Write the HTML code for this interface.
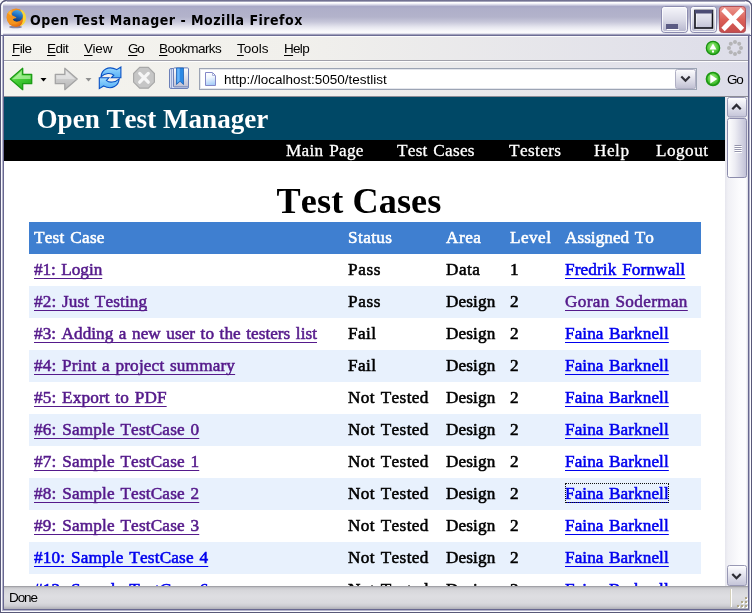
<!DOCTYPE html>
<html><head><meta charset="utf-8"><title>Open Test Manager - Mozilla Firefox</title>
<style>
html,body{margin:0;padding:0;}
body{width:752px;height:613px;overflow:hidden;position:relative;background:#d8d8e4;font-family:"Liberation Sans",sans-serif;}
.abs{position:absolute;}
#content *{font-kerning:none !important;}
.mi,#title,#status span,#content{will-change:transform;}
#titlebar{left:0;top:0;width:752px;height:36px;background:linear-gradient(#6a6a8a 0,#7c7c9c 1.2px,#ffffff 2.2px,#ffffff 3px,#dcdcea 4.5px,#a9a9c7 6.5px,#afafc9 9px,#b3b3cb 17px,#c6c6d9 22px,#e6e6ef 27px,#f8f8fb 31px,#fbfbfd 33px,#c0c0d4 34.2px,#6c6c94 35px,#6c6c94 36px);}
#title{left:30px;top:11px;font:bold 14px "DejaVu Sans Condensed","DejaVu Sans",sans-serif;color:#000;white-space:pre;line-height:18px;letter-spacing:0.5px;}
#menubar{left:4px;top:36px;width:744px;height:24px;background:linear-gradient(90deg,#f4f3ee 0,#f1f0ec 40%,#dddde9 100%);border-bottom:1px solid #a0a0aa;box-shadow:inset 0 1px 0 rgba(255,255,255,.85);}
.mi{position:absolute;top:41px;font:13.5px "Liberation Sans",sans-serif;line-height:16px;color:#000;white-space:pre;}
.mi u{text-decoration:underline;text-underline-offset:2px;text-decoration-thickness:1px;text-decoration-skip-ink:none;}
#toolbar{left:4px;top:61px;width:744px;height:35px;background:linear-gradient(90deg,#f4f3ee 0,#f1f0ec 40%,#dddde9 100%);border-bottom:1px solid #8c8c96;box-shadow:inset 0 1px 0 rgba(255,255,255,.9);}
#content{left:4px;top:97px;width:721px;height:489px;background:#fff;overflow:hidden;font-family:"Liberation Serif",serif;font-size:18px;}
#hdr{left:0;top:0;width:721px;height:43px;background:#004866;}
#hdr span{position:absolute;left:32.5px;top:7px;font:bold 27.1px "Liberation Serif",serif;color:#fff;line-height:31px;white-space:pre;}
#nav{left:0;top:43px;width:721px;height:21px;background:#000;}
#nav span{position:absolute;top:0px;color:#fff;font:17.2px/21px "Liberation Serif",serif;white-space:pre;-webkit-text-stroke:0.3px;word-spacing:1.2px;}
h1{position:absolute;left:0;top:83px;width:710px;margin:0;text-align:center;font:bold 36.2px "Liberation Serif",serif;line-height:42px;letter-spacing:0.1px;}
#tbl{left:25px;top:125px;width:672px;}
.row{position:absolute;left:0;width:672px;height:32px;}
.row.alt{background:#e8f1fd;}
.row.head{background:#3f7fd0;color:#fff;}
.row span,.row a{position:absolute;top:5px;-webkit-text-stroke:0.55px;white-space:pre;font:17.2px/21px "Liberation Serif",serif;word-spacing:1.2px;}
a{text-decoration:underline;text-decoration-skip-ink:none;text-underline-offset:3px;text-decoration-thickness:1.3px;}
a.v{color:#551a8b;}
a.n{color:#0000ee;}
a.f{outline:1px dotted #111;outline-offset:-1px;height:20px;}
#scroll{left:725px;top:97px;width:23px;height:489px;background:linear-gradient(90deg,#e6e6ee 0,#f0f0f5 3px,#fbfbfd 14px,#fdfdfe 21px,#d8d8e2 23px);}
#status{left:4px;top:586px;width:744px;height:23px;background:linear-gradient(#8e8e94 0,#b6b6bb 1px,#cbcbcf 2px,#d6d6da 4px,#dedee2 10px,#d9d9dd 17px,#cdcdd2 20px,#b8b8be 22px,#b0b0b8 23px);}
#status span{position:absolute;left:5px;top:4px;font:13.5px "Liberation Sans",sans-serif;line-height:16px;letter-spacing:-1.1px;}
.fr{position:absolute;box-sizing:border-box;border-style:solid;border-width:0 1px 1px 1px;}
</style></head><body>
<div id="titlebar" class="abs"></div>
<div id="title" class="abs">Open Test Manager - Mozilla Firefox</div>
<div id="menubar" class="abs"></div>
<span class="mi" style="left:12px;letter-spacing:-0.6px"><u>F</u>ile</span>
<span class="mi" style="left:47px;letter-spacing:-0.5px"><u>E</u>dit</span>
<span class="mi" style="left:84px;letter-spacing:-0.2px"><u>V</u>iew</span>
<span class="mi" style="left:128px;letter-spacing:-1.2px"><u>G</u>o</span>
<span class="mi" style="left:159px;letter-spacing:-0.6px"><u>B</u>ookmarks</span>
<span class="mi" style="left:237px;letter-spacing:0px"><u>T</u>ools</span>
<span class="mi" style="left:284px;letter-spacing:-0.7px"><u>H</u>elp</span>
<div id="toolbar" class="abs"></div>

<svg class="abs" style="left:0;top:0" width="752" height="97" viewBox="0 0 752 97">
<defs>
<linearGradient id="gbtn" x1="0" y1="0" x2="0" y2="1"><stop offset="0" stop-color="#f6f6fb"/><stop offset="0.5" stop-color="#dcdce8"/><stop offset="1" stop-color="#b4b4cc"/></linearGradient>
<linearGradient id="gclose" x1="0" y1="0" x2="0" y2="1"><stop offset="0" stop-color="#ec9890"/><stop offset="0.5" stop-color="#dc6058"/><stop offset="1" stop-color="#c44c4c"/></linearGradient>
<linearGradient id="ggreen" x1="0" y1="0" x2="0.6" y2="1"><stop offset="0" stop-color="#b0f098"/><stop offset="0.55" stop-color="#48d038"/><stop offset="1" stop-color="#28b020"/></linearGradient>
<linearGradient id="ggray" x1="0" y1="0" x2="0" y2="1"><stop offset="0" stop-color="#e4e4e4"/><stop offset="1" stop-color="#b4b4b4"/></linearGradient>
<linearGradient id="gblue" x1="0" y1="0" x2="0" y2="1"><stop offset="0" stop-color="#a0dcff"/><stop offset="0.5" stop-color="#78c4fa"/><stop offset="1" stop-color="#58b0f4"/></linearGradient>
<linearGradient id="gdd" x1="0" y1="0" x2="0" y2="1"><stop offset="0" stop-color="#fdfdfe"/><stop offset="0.5" stop-color="#e0e0ea"/><stop offset="1" stop-color="#c0c0d2"/></linearGradient>
<radialGradient id="gcirc" cx="0.45" cy="0.4" r="0.65"><stop offset="0" stop-color="#a8f088"/><stop offset="0.55" stop-color="#58cc40"/><stop offset="1" stop-color="#22a016"/></radialGradient>
<linearGradient id="gpage" x1="0.3" y1="0" x2="0.5" y2="1"><stop offset="0" stop-color="#ffffff"/><stop offset="0.4" stop-color="#f0f6fe"/><stop offset="1" stop-color="#a4ccf8"/></linearGradient>
<radialGradient id="gfox" cx="0.35" cy="0.4" r="0.75"><stop offset="0" stop-color="#f8a828"/><stop offset="0.6" stop-color="#f08818"/><stop offset="1" stop-color="#d85008"/></radialGradient><linearGradient id="gglobe" x1="0.6" y1="0" x2="0.3" y2="1"><stop offset="0" stop-color="#48a8e8"/><stop offset="0.5" stop-color="#1c68b8"/><stop offset="1" stop-color="#0c2c68"/></linearGradient>
</defs>
<!-- caption buttons -->
<rect x="661.5" y="6.5" width="26" height="26" rx="3" fill="url(#gbtn)" stroke="#8c8cb0"/>
<rect x="662.500" y="7.500" width="24" height="24" rx="2" fill="none" stroke="#fff" stroke-opacity="0.8"/><rect x="666" y="24" width="12" height="5" fill="#5c5c84"/><rect x="667" y="29" width="12" height="1" fill="#fff"/>
<rect x="690.5" y="6.5" width="26" height="26" rx="3" fill="url(#gbtn)" stroke="#8c8cb0"/>
<rect x="691.500" y="7.500" width="24" height="24" rx="2" fill="none" stroke="#fff" stroke-opacity="0.8"/><rect x="696" y="11.500" width="17.500" height="17.500" fill="none" stroke="#fff" stroke-width="1.200" stroke-opacity="0.8"/><rect x="695" y="10.500" width="17.500" height="17.500" fill="none" stroke="#101018" stroke-width="1.600"/><rect x="695" y="10" width="17.5" height="3.5" fill="#4c4c74"/>
<rect x="719.5" y="6.5" width="26" height="26" rx="3" fill="url(#gclose)" stroke="#b05058"/>
<path d="M723 9.500 L742.500 29.500 M742.500 9.500 L723 29.500" stroke="#fff" stroke-width="4.800" stroke-linecap="butt"/>
<!-- firefox icon -->
<ellipse cx="15.500" cy="27" rx="6.500" ry="1.300" fill="#383868" opacity="0.55"/>
<circle cx="16" cy="17.700" r="9.300" fill="url(#gfox)"/>
<path d="M20 9.500 C24.500 10.500 26.500 15 26 19 C25.500 22.500 23 25.500 20 26.300 C23 23 23.500 19 22.500 15.500 C22 13 21 11 20 9.500 Z" fill="#f8d438"/>
<circle cx="17" cy="15.800" r="5.900" fill="url(#gglobe)"/>
<path d="M6.800 15 C8 11.500 10 10 12.500 10.500 C11 12 11 14 12.500 15.500 C14 16 15.500 16.500 16.500 18 C15 18.300 13.500 18.500 12.800 19.500 C13.500 21.500 16 22.500 19 21.500 C17 24.500 12 25 9 22.500 C7 20.500 6.300 17.500 6.800 15 Z" fill="#f4941c"/>
<path d="M8 13 C9 11 10.500 10.300 12 10.600 C10.500 12.500 10.800 14.500 12 15.800 C10.500 15.500 9 14.500 8 13 Z" fill="#fbb43c"/>
<!-- back -->
<path d="M10.300 79 L22.700 68.300 L22.700 74.300 L31.700 74.300 L31.700 83.700 L22.700 83.700 L22.700 89.700 Z" fill="url(#ggreen)" stroke="#1c9c14" stroke-width="1.300" stroke-linejoin="round"/>
<path d="M12.600 79 L21.500 71.300 L21.500 75.500 L30.500 75.500 L30.500 79 Z" fill="#d8ffc8" opacity="0.55"/>
<path d="M40.500 78 L46.500 78 L43.500 81.500 Z" fill="#000"/>
<!-- forward -->
<path d="M77.200 79 L64.800 68.300 L64.800 74.300 L55.300 74.300 L55.300 83.700 L64.800 83.700 L64.800 89.700 Z" fill="url(#ggray)" stroke="#a4a4a4" stroke-width="1.300" stroke-linejoin="round"/>
<path d="M74.900 79 L66 71.300 L66 75.500 L56.500 75.500 L56.500 79 Z" fill="#ffffff" opacity="0.35"/>
<path d="M85.500 78 L91.500 78 L88.500 81.500 Z" fill="#909090"/>
<!-- reload -->
<g fill="url(#gblue)" stroke="#0850c4" stroke-width="1.100" stroke-linejoin="miter">
<path d="M101 76.800 C101.500 70 108 65.300 116.600 69.600 L120.900 67 L120.900 77.800 L111.300 77.800 L113.800 75.200 C111 72.500 105 73 101 76.800 Z"/>
<path d="M119.200 78.800 C118.700 85.600 112.200 90.300 103.600 86 L99.300 88.600 L99.300 77.800 L108.900 77.800 L106.400 80.400 C109.200 83.100 115.200 82.600 119.200 78.800 Z"/>
</g>
<!-- stop -->
<path d="M154.4 82.1 L148.3 88.2 L139.7 88.2 L133.6 82.1 L133.6 73.5 L139.7 67.4 L148.3 67.4 L154.4 73.5 Z" fill="#c6c6c6" stroke="#a8a8a8" stroke-width="1.200"/>
<path d="M139.700 73.400 L148.300 82.200 M148.300 73.400 L139.700 82.200" stroke="#f6f6f6" stroke-width="3.200" stroke-linecap="round"/>
<!-- bookmarks -->
<rect x="169.500" y="68.500" width="19" height="20" rx="1.500" fill="#d4def4" stroke="#6c80b8"/>
<path d="M171.500 69 V88 M173.500 69 V87" stroke="#8898c8" stroke-width="0.800"/>
<rect x="173.500" y="67.900" width="15" height="19" rx="1" fill="url(#gdd)" stroke="#6c80b8"/>
<path d="M176.500 68 L183.500 68 L183.500 84.500 L180 81.300 L176.500 84.500 Z" fill="#2c88e4" stroke="#1058b0" stroke-width="0.700"/>
<path d="M177.200 68.500 L179.700 68.500 L179.700 80.800 L177.200 83 Z" fill="#78c0ff" opacity="0.8"/>
<!-- url box -->
<rect x="199.500" y="68.500" width="497" height="21" fill="#fff" stroke="#9ca4b4"/><rect x="200.500" y="69.500" width="495" height="19" fill="none" stroke="#e4e6ec"/>
<path d="M205.500 72.500 L212.500 72.500 L215.500 75.500 L215.500 85.500 L205.500 85.500 Z" fill="url(#gpage)" stroke="#8488c8"/>
<path d="M212.500 72.500 L212.500 75.500 L215.500 75.500" fill="none" stroke="#a8b0d8"/>
<rect x="675.500" y="69.500" width="20" height="19" rx="2" fill="url(#gdd)" stroke="#b0b0c4"/>
<path d="M681.300 76.500 L685.500 80.700 L689.700 76.500" fill="none" stroke="#303038" stroke-width="2.2"/>
<!-- go -->
<circle cx="713" cy="79" r="6.500" fill="url(#gcirc)" stroke="#1c9812" stroke-width="1.700"/>
<path d="M710.300 74.600 L717.300 79 L710.300 83.400 Z" fill="#fff"/>
<!-- update + throbber -->
<circle cx="713" cy="48" r="6.700" fill="url(#gcirc)" stroke="#189010" stroke-width="1.200"/>
<path d="M713 43.500 L716.500 49.500 L709.500 49.500 Z" fill="#fff"/><rect x="712" y="50.500" width="2" height="2" fill="#fff"/>
<g fill="#b4b4b6"><circle cx="741.0" cy="48.0" r="2"/><circle cx="739.2" cy="52.2" r="2"/><circle cx="735.0" cy="54.0" r="2"/><circle cx="730.8" cy="52.2" r="2"/><circle cx="729.0" cy="48.0" r="2"/><circle cx="730.8" cy="43.8" r="2"/><circle cx="735.0" cy="42.0" r="2"/><circle cx="739.2" cy="43.8" r="2"/></g>
</svg>
<span class="mi" style="left:224px;top:72px;letter-spacing:0px">http://localhost:5050/testlist</span>
<span class="mi" style="left:727px;top:72px;letter-spacing:-1.3px">Go</span>
<div id="content" class="abs">
 <div id="hdr" class="abs"><span>Open Test Manager</span></div>
 <div id="nav" class="abs">
  <span style="left:282px;letter-spacing:0.286px">Main Page</span><span style="left:393px;letter-spacing:0.254px">Test Cases</span><span style="left:505px;letter-spacing:0.391px">Testers</span><span style="left:590px;letter-spacing:0.526px">Help</span><span style="left:652px;letter-spacing:0.469px">Logout</span>
 </div>
 <h1>Test Cases</h1>
 <div id="tbl" class="abs">
<div class="row head" style="top:0"><span style="left:5px;letter-spacing:0.246px">Test Case</span><span style="left:319px;letter-spacing:0.397px">Status</span><span style="left:417px;letter-spacing:0.526px">Area</span><span style="left:481px;letter-spacing:0.461px">Level</span><span style="left:536px;letter-spacing:0.023px">Assigned To</span></div>
<div class="row" style="top:32px"><a class="v" style="left:5px;letter-spacing:-0.033px">#1: Login</a><span style="left:319px;letter-spacing:0.632px">Pass</span><span style="left:417px;letter-spacing:0.510px">Data</span><span style="left:481px;letter-spacing:0.406px">1</span><a class="n" style="left:536px;letter-spacing:0.129px">Fredrik Fornwall</a></div>
<div class="row alt" style="top:64px"><a class="v" style="left:5px;letter-spacing:0.123px">#2: Just Testing</a><span style="left:319px;letter-spacing:0.632px">Pass</span><span style="left:417px;letter-spacing:0.128px">Design</span><span style="left:481px;letter-spacing:0.406px">2</span><a class="v" style="left:536px;letter-spacing:0.332px">Goran Soderman</a></div>
<div class="row" style="top:96px"><a class="v" style="left:5px;letter-spacing:0.032px">#3: Adding a new user to the testers list</a><span style="left:319px;letter-spacing:0.422px">Fail</span><span style="left:417px;letter-spacing:0.128px">Design</span><span style="left:481px;letter-spacing:0.406px">2</span><a class="n" style="left:536px;letter-spacing:0.067px">Faina Barknell</a></div>
<div class="row alt" style="top:128px"><a class="v" style="left:5px;letter-spacing:0.164px">#4: Print a project summary</a><span style="left:319px;letter-spacing:0.422px">Fail</span><span style="left:417px;letter-spacing:0.128px">Design</span><span style="left:481px;letter-spacing:0.406px">2</span><a class="n" style="left:536px;letter-spacing:0.067px">Faina Barknell</a></div>
<div class="row" style="top:160px"><a class="v" style="left:5px;letter-spacing:0.149px">#5: Export to PDF</a><span style="left:319px;letter-spacing:0.365px">Not Tested</span><span style="left:417px;letter-spacing:0.128px">Design</span><span style="left:481px;letter-spacing:0.406px">2</span><a class="n" style="left:536px;letter-spacing:0.067px">Faina Barknell</a></div>
<div class="row alt" style="top:192px"><a class="v" style="left:5px;letter-spacing:0.173px">#6: Sample TestCase 0</a><span style="left:319px;letter-spacing:0.365px">Not Tested</span><span style="left:417px;letter-spacing:0.128px">Design</span><span style="left:481px;letter-spacing:0.406px">2</span><a class="n" style="left:536px;letter-spacing:0.067px">Faina Barknell</a></div>
<div class="row" style="top:224px"><a class="v" style="left:5px;letter-spacing:0.173px">#7: Sample TestCase 1</a><span style="left:319px;letter-spacing:0.365px">Not Tested</span><span style="left:417px;letter-spacing:0.128px">Design</span><span style="left:481px;letter-spacing:0.406px">2</span><a class="n" style="left:536px;letter-spacing:0.067px">Faina Barknell</a></div>
<div class="row alt" style="top:256px"><a class="v" style="left:5px;letter-spacing:0.173px">#8: Sample TestCase 2</a><span style="left:319px;letter-spacing:0.365px">Not Tested</span><span style="left:417px;letter-spacing:0.128px">Design</span><span style="left:481px;letter-spacing:0.406px">2</span><a class="n f" style="left:536px;letter-spacing:0.067px">Faina Barknell</a></div>
<div class="row" style="top:288px"><a class="v" style="left:5px;letter-spacing:0.173px">#9: Sample TestCase 3</a><span style="left:319px;letter-spacing:0.365px">Not Tested</span><span style="left:417px;letter-spacing:0.128px">Design</span><span style="left:481px;letter-spacing:0.406px">2</span><a class="n" style="left:536px;letter-spacing:0.067px">Faina Barknell</a></div>
<div class="row alt" style="top:320px"><a class="n" style="left:5px;letter-spacing:0.184px">#10: Sample TestCase 4</a><span style="left:319px;letter-spacing:0.365px">Not Tested</span><span style="left:417px;letter-spacing:0.128px">Design</span><span style="left:481px;letter-spacing:0.406px">2</span><a class="n" style="left:536px;letter-spacing:0.067px">Faina Barknell</a></div>
<div class="row" style="top:352px"><a class="n" style="left:5px;letter-spacing:0.184px">#12: Sample TestCase 6</a><span style="left:319px;letter-spacing:0.365px">Not Tested</span><span style="left:417px;letter-spacing:0.128px">Design</span><span style="left:481px;letter-spacing:0.406px">2</span><a class="n" style="left:536px;letter-spacing:0.067px">Faina Barknell</a></div>
</div>
</div>
<div id="scroll" class="abs">
<svg class="abs" style="left:0;top:0" width="23" height="489" viewBox="0 0 23 489">
<defs>
<linearGradient id="sbv" x1="0" y1="0" x2="0" y2="1"><stop offset="0" stop-color="#ffffff"/><stop offset="0.25" stop-color="#f0f0f6"/><stop offset="1" stop-color="#c4c4d8"/></linearGradient>
<linearGradient id="sbh" x1="0" y1="0" x2="1" y2="0"><stop offset="0" stop-color="#ffffff"/><stop offset="0.4" stop-color="#ececf3"/><stop offset="1" stop-color="#c0c0d6"/></linearGradient>
</defs>
<rect x="2.500" y="0.500" width="19" height="19.500" rx="2" fill="url(#sbv)" stroke="#9898b4"/>
<path d="M7.300 12.200 L11.500 8 L15.700 12.200" fill="none" stroke="#2c2c34" stroke-width="2.300"/>
<rect x="2.500" y="21.500" width="19" height="59" rx="2" fill="url(#sbh)" stroke="#8c8cac"/>
<path d="M9.500 48.500 h7 M9.500 50.500 h7 M9.500 52.500 h7 M9.500 54.500 h7" stroke="#9494ac" stroke-width="1"/>
<path d="M10 49.500 h7 M10 51.500 h7 M10 53.500 h7 M10 55.500 h7" stroke="#ffffff" stroke-width="1"/>
<rect x="2.500" y="468.500" width="19" height="20" rx="2" fill="url(#sbv)" stroke="#9898b4"/>
<path d="M7.300 477 L11.500 481.200 L15.700 477" fill="none" stroke="#2c2c34" stroke-width="2.300"/>
</svg></div>
<div id="status" class="abs"><span>Done</span>
<div class="abs" style="left:726px;top:3px;width:1px;height:18px;background:#d4d0bc"></div><div class="abs" style="left:727px;top:3px;width:1px;height:18px;background:#fff"></div>
<svg class="abs" style="left:732px;top:9px" width="14" height="14" viewBox="0 0 14 14"><g fill="#fff"><rect x="10" y="3" width="2" height="2"/><rect x="6" y="7" width="2" height="2"/><rect x="10" y="7" width="2" height="2"/><rect x="2" y="11" width="2" height="2"/><rect x="6" y="11" width="2" height="2"/><rect x="10" y="11" width="2" height="2"/></g><g fill="#b0a888"><rect x="9" y="2" width="2" height="2"/><rect x="5" y="6" width="2" height="2"/><rect x="9" y="6" width="2" height="2"/><rect x="1" y="10" width="2" height="2"/><rect x="5" y="10" width="2" height="2"/><rect x="9" y="10" width="2" height="2"/></g></svg>
</div>
<div class="abs" style="left:0;top:0;width:1px;height:36px;background:#585878"></div><div class="abs" style="left:1px;top:2px;width:1.5px;height:33px;background:rgba(255,255,255,.85)"></div><div class="abs" style="left:751px;top:0;width:1px;height:36px;background:#585878"></div><div class="abs" style="left:749.5px;top:2px;width:1.5px;height:33px;background:rgba(255,255,255,.85)"></div><svg class="abs" style="left:0;top:0" width="752" height="10" viewBox="0 0 752 10"><path d="M0 0 L6 0 A6 6 0 0 0 0 6 Z" fill="#f6f6fb"/><path d="M0.500 6.500 A6 6 0 0 1 6.500 0.500" fill="none" stroke="#585878" stroke-width="1.300"/><path d="M1.700 7 A5 5 0 0 1 7 1.900" fill="none" stroke="#fff" stroke-width="1.100" opacity="0.9"/><path d="M752 0 L746 0 A6 6 0 0 1 752 6 Z" fill="#f6f6fb"/><path d="M751.500 6.500 A6 6 0 0 0 745.500 0.500" fill="none" stroke="#585878" stroke-width="1.300"/><path d="M750.300 7 A5 5 0 0 0 745 1.900" fill="none" stroke="#fff" stroke-width="1.100" opacity="0.9"/></svg><div class="fr" style="left:0;top:36px;width:752px;height:577px;border-color:#585878"></div><div class="fr" style="left:1px;top:36px;width:750px;height:576px;border-color:#fafafe"></div><div class="fr" style="left:2px;top:36px;width:748px;height:575px;border-color:#b4b4cc"></div><div class="fr" style="left:3px;top:36px;width:746px;height:574px;border-color:#686890"></div>
</body></html>
